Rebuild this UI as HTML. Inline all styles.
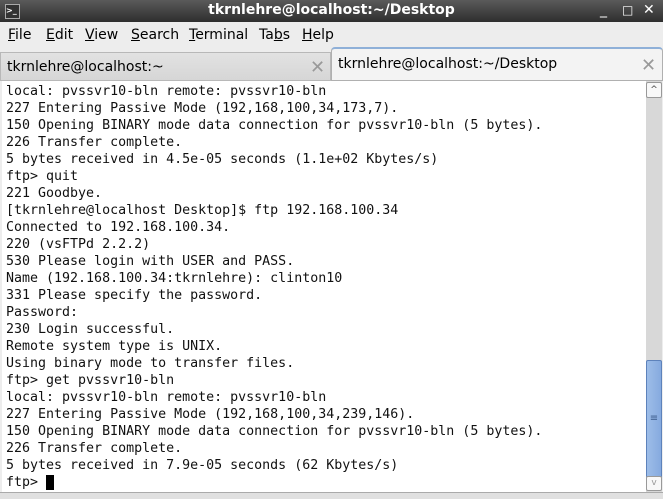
<!DOCTYPE html><html><head><style>
body{margin:0;width:663px;height:498px;overflow:hidden;background:#ededed;font-family:"DejaVu Sans","Liberation Sans",sans-serif;position:relative}
.title{position:absolute;left:0;top:0;width:663px;height:22px;background:linear-gradient(#5a5a5a,#2e2e2e);color:#fff;font-weight:bold;font-size:14px;text-align:center;line-height:21px}
.menu{position:absolute;top:22px;left:0;width:663px;height:26px;background:#ededed;font-size:14px;line-height:26px}
.menu span{position:absolute}
.tab{position:absolute;font-size:14px;line-height:26px;box-sizing:border-box}
.term{position:absolute;left:2px;top:81px;width:644px;height:409px;padding-top:2px;background:#fff;font-family:"DejaVu Sans Mono","Liberation Mono",monospace;font-size:13.3px;line-height:17px;white-space:pre;padding-left:4px;color:#111}
.x{position:absolute;color:#999;font-size:18px}
</style></head><body>
<div class="title">tkrnlehre@localhost:~/Desktop
<div style="position:absolute;left:5px;top:4px;width:13px;height:13px;background:#333;border:1px solid #aaa;font-size:8px;line-height:12px;text-align:left">&gt;_</div>
<span style="position:absolute;left:600px;top:0;font-weight:normal">_</span>
<span style="position:absolute;left:622px;top:0;font-weight:normal;font-size:12px">□</span>
<span style="position:absolute;left:643px;top:0;font-weight:normal">✕</span>
</div>
<div class="menu">
<span style="left:8px"><u>F</u>ile</span><span style="left:46px"><u>E</u>dit</span><span style="left:85px"><u>V</u>iew</span><span style="left:131px"><u>S</u>earch</span><span style="left:189px"><u>T</u>erminal</span><span style="left:259px">Ta<u>b</u>s</span><span style="left:302px"><u>H</u>elp</span>
</div>
<div class="tab" style="left:0;top:52px;width:331px;height:29px;background:linear-gradient(#e2e2e2,#d6d6d6);border:1px solid #b8b8b8;padding:1px 6px">tkrnlehre@localhost:~<span class="x" style="left:309px;top:2px">✕</span></div>
<div class="tab" style="left:331px;top:47px;width:332px;height:34px;background:#f3f3f3;border:1px solid #b0b0b0;border-top:2px solid #8fb0d8;border-radius:4px 4px 0 0;padding:2px 6px">tkrnlehre@localhost:~/Desktop<span class="x" style="left:309px;top:4px">✕</span></div>
<div class="term">local: pvssvr10-bln remote: pvssvr10-bln
227 Entering Passive Mode (192,168,100,34,173,7).
150 Opening BINARY mode data connection for pvssvr10-bln (5 bytes).
226 Transfer complete.
5 bytes received in 4.5e-05 seconds (1.1e+02 Kbytes/s)
ftp&gt; quit
221 Goodbye.
[tkrnlehre@localhost Desktop]$ ftp 192.168.100.34
Connected to 192.168.100.34.
220 (vsFTPd 2.2.2)
530 Please login with USER and PASS.
Name (192.168.100.34:tkrnlehre): clinton10
331 Please specify the password.
Password:
230 Login successful.
Remote system type is UNIX.
Using binary mode to transfer files.
ftp&gt; get pvssvr10-bln
local: pvssvr10-bln remote: pvssvr10-bln
227 Entering Passive Mode (192,168,100,34,239,146).
150 Opening BINARY mode data connection for pvssvr10-bln (5 bytes).
226 Transfer complete.
5 bytes received in 7.9e-05 seconds (62 Kbytes/s)
ftp&gt; <span style="background:#000"> </span></div>
<div style="position:absolute;left:646px;top:81px;width:16px;height:411px;background:#d8d8d8"></div>
<div style="position:absolute;left:646px;top:82px;width:14px;height:14px;background:#f8f8f8;border:1px solid #999;border-radius:2px;font-size:9px;text-align:center;line-height:14px;color:#444">^</div>
<div style="position:absolute;left:646px;top:360px;width:14px;height:116px;background:linear-gradient(90deg,#9dbde8,#86aadf);border:1px solid #5d82bb;border-radius:2px;color:#3a5a8a;font-size:10px;text-align:center;line-height:116px">≡</div>
<div style="position:absolute;left:646px;top:476px;width:14px;height:13px;background:#f8f8f8;border:1px solid #999;border-radius:2px;font-size:9px;text-align:center;line-height:12px;color:#999">v</div>
<div style="position:absolute;left:0;top:492px;width:663px;height:6px;background:#e0e0e0;border-top:1px solid #aaa"></div>
</body></html>
